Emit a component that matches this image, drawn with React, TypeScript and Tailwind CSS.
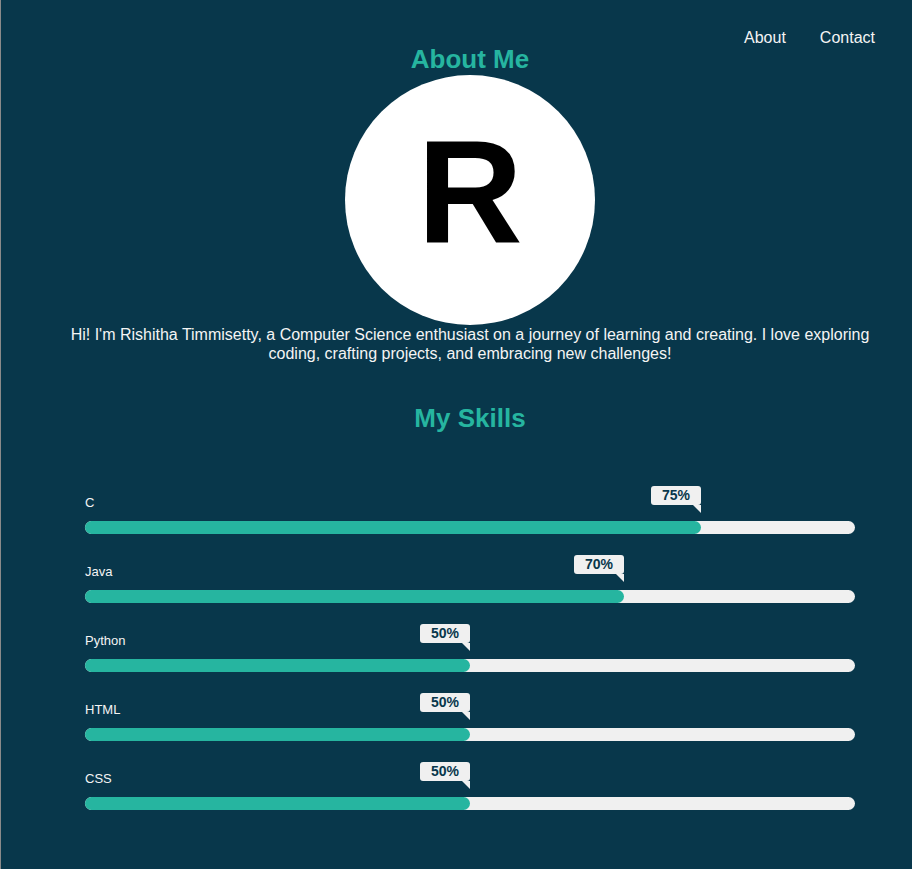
import React from 'react';

interface Skill {
  name: string;
  label: string;
  width: number;
}

const skills: Skill[] = [
  { name: 'C', label: '75%', width: 80 },
  { name: 'Java', label: '70%', width: 70 },
  { name: 'Python', label: '50%', width: 50 },
  { name: 'HTML', label: '50%', width: 50 },
  { name: 'CSS', label: '50%', width: 50 },
];

function SkillBar({ skill }: { skill: Skill }) {
  return (
    <div className="flex flex-col">
      <span className="text-[13px] leading-[16px] text-[#f4f4f4] mb-[10px]">{skill.name}</span>
      <div className="h-[13px] w-full rounded-full bg-[#f0f0f0]">
        <div className="relative h-full rounded-full bg-[#26b5a0]" style={{ width: `${skill.width}%` }}>
          {/* Tooltip */}
          <div className="absolute right-0 bottom-full mb-[8px] flex flex-col items-end">
            <span className="h-[19px] rounded-[3px] bg-[#f0f0f0] px-[11px] text-[14px] font-bold leading-[19px] text-[#08374b]">
              {skill.label}
            </span>
            <div className="h-0 w-0 border-t-[8px] border-l-[8px] border-t-[#f0f0f0] border-l-transparent" />
          </div>
        </div>
      </div>
    </div>
  );
}

export default function App() {
  return (
    <div
      className="relative min-h-screen border-l border-[#8a8a8a] bg-[#08374b] pl-[27px]"
      style={{ fontFamily: '"Liberation Sans", Arial, sans-serif' }}
    >
      {/* Nav */}
      <nav className="absolute top-[29px] right-[37px] flex gap-[34px] text-[16px] leading-[18px] text-[#f4f4f4]">
        <a href="#about">About</a>
        <a href="#contact">Contact</a>
      </nav>

      {/* About */}
      <section id="about" className="flex flex-col items-center pt-[44px]">
        <h2 className="text-[26px] font-bold leading-[30px] text-[#26b5a0]">About Me</h2>
        <div className="mt-[1px] flex h-[250px] w-[250px] items-center justify-center rounded-full bg-white pb-[17px]">
          <span className="text-[146px] font-bold leading-none text-black">R</span>
        </div>
        <p className="px-[38px] text-center text-[16px] leading-[19px] text-[#f4f4f4]">
          Hi! I'm Rishitha Timmisetty, a Computer Science enthusiast on a journey of learning and creating. I love
          exploring coding, crafting projects, and embracing new challenges!
        </p>
      </section>

      {/* Skills */}
      <section className="flex flex-col items-center pt-[40px]">
        <h2 className="text-[26px] font-bold leading-[30px] text-[#26b5a0]">My Skills</h2>
        <div className="mt-[62px] flex w-full flex-col gap-[30px] px-[57px]">
          {skills.map((skill) => (
            <SkillBar key={skill.name} skill={skill} />
          ))}
        </div>
      </section>
    </div>
  );
}
